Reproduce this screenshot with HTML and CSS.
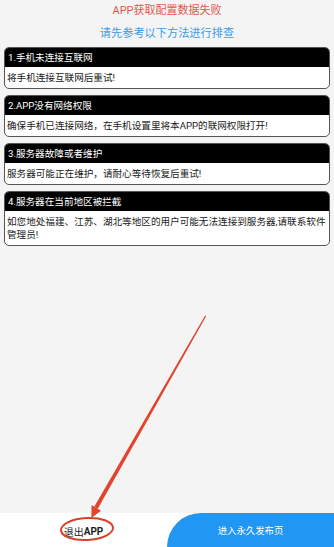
FILE: index.html
```html
<!DOCTYPE html>
<html lang="zh-CN">
<head>
<meta charset="utf-8">
<title>APP获取配置数据失败</title>
<link rel="stylesheet" href="styles.css">
</head>
<body>
<div class="page">
  <main class="main">
    <div class="title">APP获取配置数据失败</div>
    <div class="subtitle">请先参考以下方法进行排查</div>
    <div class="cards">
      <div class="card">
        <div class="card-head">1.手机未连接互联网</div>
        <div class="card-body">将手机连接互联网后重试!</div>
      </div>
      <div class="card">
        <div class="card-head">2.APP没有网络权限</div>
        <div class="card-body">确保手机已连接网络，在手机设置里将本APP的联网权限打开!</div>
      </div>
      <div class="card">
        <div class="card-head">3.服务器故障或者维护</div>
        <div class="card-body">服务器可能正在维护，请耐心等待恢复后重试!</div>
      </div>
      <div class="card">
        <div class="card-head">4.服务器在当前地区被拦截</div>
        <div class="card-body">如您地处福建、江苏、湖北等地区的用户可能无法连接到服务器,请联系软件管理员!</div>
      </div>
    </div>
  </main>
  <footer class="footer">
    <div class="btn-exit">退出<b class="app">APP</b></div>
    <div class="btn-enter">进入永久发布页</div>
  </footer>
  <svg class="annot" width="334" height="547" viewBox="0 0 334 547" xmlns="http://www.w3.org/2000/svg">
    <polygon points="205.1,315.5 206.1,316.2 97.8,508.8 94.2,506.8" fill="#e2442e"/>
    <polygon points="91.3,518 101,510.8 91.6,505" fill="#e2442e"/>
    <ellipse cx="87" cy="529" rx="26" ry="11" fill="none" stroke="#d9412d" stroke-width="2" transform="rotate(-3 87 529)"/>
  </svg>
</div>
</body>
</html>
```
FILE: styles.css
```css
html, body {
  margin: 0;
  padding: 0;
}
body {
  background: #f4f4f4;
  font-family: Roboto, "Noto Sans CJK SC", sans-serif;
}
.page {
  position: relative;
  min-height: 547px;
  display: flex;
  flex-direction: column;
}
.main {
  flex: 1;
  padding-top: 4px;
}
.title {
  text-align: center;
  color: #e4574c;
  font-size: 11px;
  line-height: 14px;
}
.subtitle {
  text-align: center;
  color: #3d9be6;
  font-size: 11.2px;
  line-height: 14px;
  margin-top: 9px;
}
.cards {
  margin: 6px 4px 0;
  display: flex;
  flex-direction: column;
  gap: 6px;
}
.card {
  border: 1px solid #555;
  border-radius: 5px;
  overflow: hidden;
  background: #fff;
}
.card-head {
  background: #000;
  color: #fff;
  font-size: 9.6px;
  line-height: 19px;
  padding: 0 3px;
}
.card-body {
  color: #1a1a1a;
  font-size: 9.6px;
  line-height: 13px;
  padding: 4px 2px 4px;
}
.footer {
  height: 34px;
  display: grid;
  grid-template-columns: 167px 1fr;
  background: #fff;
}
.btn-exit {
  display: flex;
  align-items: center;
  justify-content: center;
  color: #222;
  font-size: 10px;
  padding-top: 2px;
}
.app {
  font-weight: 700;
}
.btn-enter {
  display: flex;
  align-items: center;
  justify-content: center;
  background: #2196f3;
  color: #fff;
  font-size: 9.4px;
  border-top-left-radius: 34px 34px;
}
.annot {
  position: absolute;
  left: 0;
  top: 0;
  pointer-events: none;
}
```
